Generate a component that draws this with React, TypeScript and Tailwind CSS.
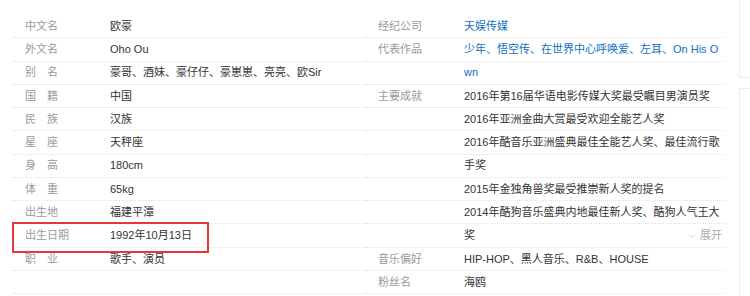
import React from "react";
import { ChevronDown } from "lucide-react";

type Row = { label: string; value: string; blue?: boolean; more?: boolean };

const left: Row[] = [
  { label: "中文名", value: "欧豪" },
  { label: "外文名", value: "Oho Ou" },
  { label: "别\u3000名", value: "豪哥、酒妹、豪仔仔、豪崽崽、亮亮、欧Sir" },
  { label: "国\u3000籍", value: "中国" },
  { label: "民\u3000族", value: "汉族" },
  { label: "星\u3000座", value: "天秤座" },
  { label: "身\u3000高", value: "180cm" },
  { label: "体\u3000重", value: "65kg" },
  { label: "出生地", value: "福建平潭" },
  { label: "出生日期", value: "1992年10月13日" },
  { label: "职\u3000业", value: "歌手、演员" },
  { label: "", value: "" },
];

const right: Row[] = [
  { label: "经纪公司", value: "天娱传媒", blue: true },
  { label: "代表作品", value: "少年、悟空传、在世界中心呼唤爱、左耳、On His O", blue: true },
  { label: "", value: "wn", blue: true },
  { label: "主要成就", value: "2016年第16届华语电影传媒大奖最受瞩目男演员奖" },
  { label: "", value: "2016年亚洲金曲大赏最受欢迎全能艺人奖" },
  { label: "", value: "2016年酷音乐亚洲盛典最佳全能艺人奖、最佳流行歌" },
  { label: "", value: "手奖" },
  { label: "", value: "2015年金独角兽奖最受推崇新人奖的提名" },
  { label: "", value: "2014年酷狗音乐盛典内地最佳新人奖、酷狗人气王大" },
  { label: "", value: "奖", more: true },
  { label: "音乐偏好", value: "HIP-HOP、黑人音乐、R&B、HOUSE" },
  { label: "粉丝名", value: "海鸥" },
];

function Column({ rows, pl }: { rows: Row[]; pl: string }) {
  return (
    <div className="flex flex-col flex-1">
      {rows.map((r, i) => (
        <div
          key={i}
          className="flex items-center h-[23.27px] border-b border-dotted border-[#e2e2e2] whitespace-nowrap"
        >
          <div className={`w-[98px] shrink-0 text-[#9a9a9a] ${pl}`}>{r.label}</div>
          <div className={`flex-1 flex items-center ${r.blue ? "text-[#136ec2]" : "text-[#333333]"}`}>
            <span>{r.value}</span>
            {r.more && (
              <span className="ml-auto flex items-center gap-[3px] pr-[2px] text-[#aaaaaa]">
                <ChevronDown size={10} strokeWidth={1.5} />
                <span>展开</span>
              </span>
            )}
          </div>
        </div>
      ))}
    </div>
  );
}

export default function App() {
  return (
    <div
      className="w-[750px] h-[296px] bg-white flex overflow-hidden text-[11px]"
      style={{ fontFamily: '"Liberation Sans", "Noto Sans CJK SC", sans-serif' }}
    >
      <div className="relative w-[739px] shrink-0 pl-[12px] pt-[15px]">
        <div className="flex w-[712px]">
          <div className="w-[354px] flex">
            <Column rows={left} pl="pl-[13px]" />
          </div>
          <div className="flex-1 flex">
            <Column rows={right} pl="pl-[12px]" />
          </div>
        </div>
        <div className="absolute left-[12px] top-[222px] w-[197px] h-[31px] border-2 border-[#e5383b]" />
      </div>
      <div className="flex-1 flex flex-col gap-[10px]">
        <div className="h-[78px] border-l border-b border-[#ececec]" />
        <div className="flex-1 border-l border-t border-[#ececec]" />
      </div>
    </div>
  );
}
